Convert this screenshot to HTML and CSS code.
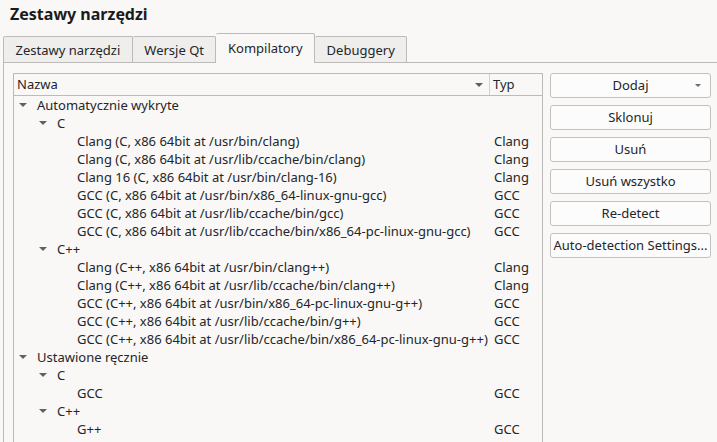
FILE: index.html
```html
<!DOCTYPE html>
<html lang="pl">
<head>
<meta charset="utf-8">
<link rel="stylesheet" href="styles.css">
</head>
<body>
<div class="title">Zestawy narzędzi</div>
<div class="tabwidget">
  <div class="tabbar">
    <div class="tab first">Zestawy narzędzi</div>
    <div class="tab">Wersje Qt</div>
    <div class="tab active">Kompilatory</div>
    <div class="tab">Debuggery</div>
  </div>
  <div class="pane">
    <div class="tree">
      <div class="header">
        <div class="hcol name">Nazwa<span class="sort"></span></div>
        <div class="hcol type">Typ</div>
      </div>
      <div class="rows">
        <div class="row"><div class="name l0"><span class="arrow"></span>Automatycznie wykryte</div><div class="type"></div></div>
        <div class="row"><div class="name l1"><span class="arrow"></span>C</div><div class="type"></div></div>
        <div class="row"><div class="name l2">Clang (C, x86 64bit at /usr/bin/clang)</div><div class="type">Clang</div></div>
        <div class="row"><div class="name l2">Clang (C, x86 64bit at /usr/lib/ccache/bin/clang)</div><div class="type">Clang</div></div>
        <div class="row"><div class="name l2">Clang 16 (C, x86 64bit at /usr/bin/clang-16)</div><div class="type">Clang</div></div>
        <div class="row"><div class="name l2">GCC (C, x86 64bit at /usr/bin/x86_64-linux-gnu-gcc)</div><div class="type">GCC</div></div>
        <div class="row"><div class="name l2">GCC (C, x86 64bit at /usr/lib/ccache/bin/gcc)</div><div class="type">GCC</div></div>
        <div class="row"><div class="name l2">GCC (C, x86 64bit at /usr/lib/ccache/bin/x86_64-pc-linux-gnu-gcc)</div><div class="type">GCC</div></div>
        <div class="row"><div class="name l1"><span class="arrow"></span>C++</div><div class="type"></div></div>
        <div class="row"><div class="name l2">Clang (C++, x86 64bit at /usr/bin/clang++)</div><div class="type">Clang</div></div>
        <div class="row"><div class="name l2">Clang (C++, x86 64bit at /usr/lib/ccache/bin/clang++)</div><div class="type">Clang</div></div>
        <div class="row"><div class="name l2">GCC (C++, x86 64bit at /usr/bin/x86_64-pc-linux-gnu-g++)</div><div class="type">GCC</div></div>
        <div class="row"><div class="name l2">GCC (C++, x86 64bit at /usr/lib/ccache/bin/g++)</div><div class="type">GCC</div></div>
        <div class="row"><div class="name l2">GCC (C++, x86 64bit at /usr/lib/ccache/bin/x86_64-pc-linux-gnu-g++)</div><div class="type">GCC</div></div>
        <div class="row"><div class="name l0"><span class="arrow"></span>Ustawione ręcznie</div><div class="type"></div></div>
        <div class="row"><div class="name l1"><span class="arrow"></span>C</div><div class="type"></div></div>
        <div class="row"><div class="name l2">GCC</div><div class="type">GCC</div></div>
        <div class="row"><div class="name l1"><span class="arrow"></span>C++</div><div class="type"></div></div>
        <div class="row"><div class="name l2">G++</div><div class="type">GCC</div></div>
      </div>
    </div>
    <div class="buttons">
      <div class="btn menu">Dodaj<span class="drop"></span></div>
      <div class="btn">Sklonuj</div>
      <div class="btn">Usuń</div>
      <div class="btn">Usuń wszystko</div>
      <div class="btn">Re-detect</div>
      <div class="btn">Auto-detection Settings...</div>
    </div>
  </div>
</div>
</body>
</html>
```
FILE: styles.css
```css
html, body {
  margin: 0;
  padding: 0;
  height: 100%;
  overflow: hidden;
}
body {
  background: #f9f8f7;
  color: #232629;
  font-family: "Noto Sans", "Open Sans", sans-serif;
  font-size: 13px;
}
.title {
  font-size: 16px;
  font-weight: bold;
  padding: 2px 0 0 10px;
  height: 31px;
  line-height: 24px;
  color: #1b1b1b;
}
.tabwidget {
  margin-left: 3px;
}
.tabbar {
  display: flex;
  align-items: flex-end;
  height: 29px;
  position: relative;
  z-index: 1;
}
.tab {
  height: 26px;
  line-height: 26px;
  padding: 0 11.5px;
  background: #efeeed;
  border: 1px solid #bcbbba;
  border-bottom: none;
  border-left: none;
  border-radius: 2px 2px 0 0;
  box-sizing: border-box;
}
.tab.first {
  border-left: 1px solid #bcbbba;
}
.tab.active {
  background: #f9f8f7;
  height: 30px;
  line-height: 29px;
  margin-bottom: -1px;
}
.pane {
  border-top: 1px solid #bcbbba;
  border-left: 1px solid #bcbbba;
  padding: 10px 0 0 9px;
  display: flex;
  gap: 7px;
  height: 380px;
}
.tree {
  width: 530px;
  box-sizing: border-box;
  border: 1px solid #bcbbba;
  border-bottom: none;
  background: #f9f8f7;
}
.header {
  display: flex;
  height: 21px;
  border-bottom: 1px solid #bcbbba;
  background: #f9f8f7;
}
.hcol {
  line-height: 21px;
  padding-left: 3px;
  box-sizing: border-box;
  position: relative;
}
.header .name {
  width: 476px;
  border-right: 1px solid #d3d2d1;
}
.sort {
  position: absolute;
  right: 6px;
  top: 9px;
  width: 0;
  height: 0;
  border-left: 4px solid transparent;
  border-right: 4px solid transparent;
  border-top: 4px solid #5e5e5e;
}
.row {
  display: flex;
  height: 18px;
  line-height: 18px;
  white-space: nowrap;
}
.row .name {
  width: 476px;
  box-sizing: border-box;
  position: relative;
}
.row .type {
  padding-left: 4px;
}
.l0 { padding-left: 23px; }
.l1 { padding-left: 43px; }
.l2 { padding-left: 63px; }
.arrow {
  position: absolute;
  top: 7px;
  width: 0;
  height: 0;
  border-left: 4px solid transparent;
  border-right: 4px solid transparent;
  border-top: 4px solid #616161;
}
.l0 .arrow { left: 5px; }
.l1 .arrow { left: 25px; }
.buttons {
  width: 161px;
  display: flex;
  flex-direction: column;
  gap: 7px;
}
.btn {
  height: 25px;
  box-sizing: border-box;
  border: 1px solid #c2c1c0;
  border-radius: 3px;
  background: #fcfcfc;
  text-align: center;
  line-height: 23px;
  position: relative;
  white-space: nowrap;
}
.drop {
  position: absolute;
  right: 9px;
  top: 10px;
  width: 0;
  height: 0;
  border-left: 3px solid transparent;
  border-right: 3px solid transparent;
  border-top: 3px solid #6a6a6a;
}
```
